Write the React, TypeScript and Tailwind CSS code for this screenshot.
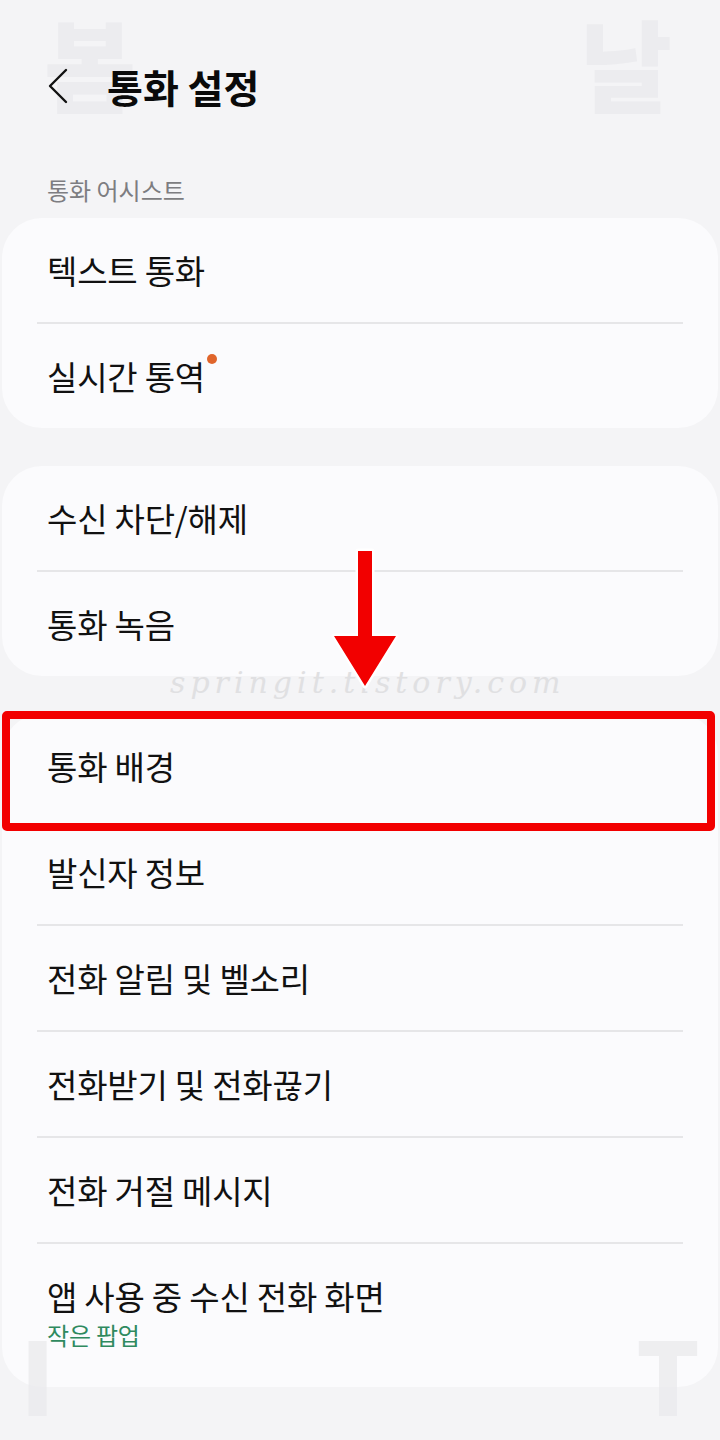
import React from 'react';

const FONT = "font-['Noto_Sans_CJK_KR','Noto_Sans',sans-serif]";

type Row = { label: string; dot?: boolean; sub?: string; noLine?: boolean };

const GROUP1: Row[] = [{ label: '텍스트 통화' }, { label: '실시간 통역', dot: true }];
const GROUP2: Row[] = [{ label: '수신 차단/해제' }, { label: '통화 녹음' }];
// the first line here sits under the red frame in the screenshot
const GROUP3: Row[] = [
  { label: '통화 배경' },
  { label: '발신자 정보', noLine: true },
  { label: '전화 알림 및 벨소리' },
  { label: '전화받기 및 전화끊기' },
  { label: '전화 거절 메시지' },
  { label: '앱 사용 중 수신 전화 화면', sub: '작은 팝업' },
];

function Card({ rows }: { rows: Row[] }) {
  return (
    <div className="mx-[2px] rounded-[40px] bg-[#fbfbfd] px-[35px]">
      {rows.map((r, i) => (
        <div key={r.label}>
          {i > 0 && <div className={`h-[2px] ${r.noLine ? 'bg-transparent' : 'bg-[#e6e6e8]'}`} />}
          {r.sub ? (
            <div className="flex h-[143px] flex-col justify-start px-[10px] pt-[32px]">
              <span className="text-[33px] leading-[40px] tracking-[-0.2px] text-[#111]">{r.label}</span>
              <span className="mt-[4px] text-[24px] leading-[30px] tracking-[-0.2px] text-[#2f8a5f]">{r.sub}</span>
            </div>
          ) : (
            <div className="flex h-[104px] items-center px-[10px]">
              <span className="relative text-[33px] leading-[40px] tracking-[-0.2px] text-[#111]">
                {r.label}
                {r.dot && (
                  <span className="absolute right-[-12px] top-[-2px] h-[10px] w-[10px] rounded-full bg-[#e0652b]" />
                )}
              </span>
            </div>
          )}
        </div>
      ))}
    </div>
  );
}

export default function App() {
  return (
    <div className={`relative h-[1440px] w-[720px] overflow-hidden bg-[#f4f4f6] ${FONT}`}>
      {/* faint blog watermark letters */}
      <span className="pointer-events-none absolute left-[44px] top-[0px] text-[100px] font-black leading-[124px] text-[#ececef]">봄</span>
      <span className="pointer-events-none absolute left-[580px] top-[0px] text-[100px] font-black leading-[124px] text-[#ececef]">날</span>

      {/* header */}
      <div className="relative flex h-[176px] items-center pl-[46px] pb-[4px]">
        <svg width="24" height="36" viewBox="0 0 24 36">
          <path d="M20 2 L4 18 L20 34" fill="none" stroke="#111" strokeWidth="2.4" strokeLinecap="round" strokeLinejoin="round" />
        </svg>
        <h1 className="ml-[37px] text-[39px] font-bold tracking-[0px] text-[#0a0a0a]">통화 설정</h1>
      </div>

      <div className="relative px-[47px] pb-[10px] text-[24px] leading-[28px] tracking-[0px] text-[#7d7d81]">통화 어시스트</div>

      <div className="relative flex flex-col gap-[38px] pt-[4px]">
        <Card rows={GROUP1} />
        <Card rows={GROUP2} />
        <Card rows={GROUP3} />
      </div>

      <span className="pointer-events-none absolute left-[20px] top-[1318px] text-[100px] font-black leading-[110px] text-[#ebebee] opacity-80">I</span>
      <span className="pointer-events-none absolute left-[636px] top-[1318px] text-[100px] font-black leading-[110px] text-[#ebebee] opacity-80">T</span>

      {/* watermark url */}
      <div className="pointer-events-none absolute left-[170px] top-[660px] font-['DejaVu_Serif',serif] text-[30px] italic tracking-[5px] text-[#e0e0e2]">
        springit.tistory.com
      </div>

      {/* red highlight overlay */}
      <div className="pointer-events-none absolute left-[2px] top-[711px] h-[120px] w-[713px] rounded-[5px] border-[8px] border-[#f20000]" />
      <svg className="pointer-events-none absolute left-[328px] top-[546px]" width="72" height="144" viewBox="0 0 72 144">
        <path
          d="M30 5 H44 V90 H68 L37 140 L6 90 H30 Z"
          fill="#f20000"
          stroke="#ffffff"
          strokeWidth="5"
          strokeLinejoin="round"
          paintOrder="stroke"
        />
      </svg>
    </div>
  );
}
